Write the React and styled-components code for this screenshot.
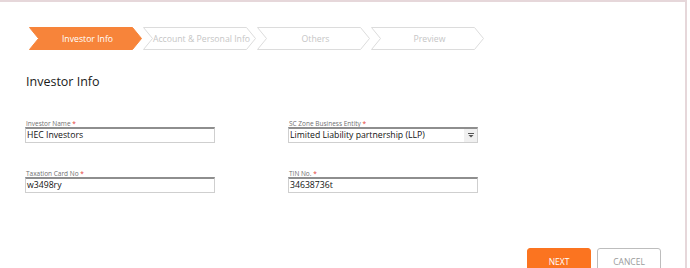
import React from "react";
import styled, { createGlobalStyle } from "styled-components";

const Global = createGlobalStyle`
  html, body { margin: 0; padding: 0; background: #fff; }
  body { font-family: "Open Sans", "Liberation Sans", sans-serif; }
`;

const Panel = styled.div`
  width: 687px;
  height: 268px;
  border-top: 2px solid #e6d7da;
  border-right: 2px solid #e6d7da;
  box-sizing: border-box;
  padding: 25px 0 0 25px;
  overflow: hidden;
`;

const Stepper = styled.div`
  display: flex;
  gap: 1px;
  margin-left: 4px;
`;

const StepBox = styled.div`
  position: relative;
  width: 113px;
  height: 23px;
  display: flex;
  align-items: center;
  justify-content: center;
  padding-left: 4px;
  box-sizing: border-box;
  font-size: 8.7px;
  color: ${(p) => (p.$active ? "#ffffff" : "#c6c6c6")};
`;

const StepShape = styled.svg`
  position: absolute;
  inset: 0;
`;

const StepLabel = styled.span`
  position: relative;
`;

const Step = ({ active, children }) => (
  <StepBox $active={active}>
    <StepShape width="113" height="23" viewBox="0 0 113 23">
      <polygon
        points="0.5,0.5 103.5,0.5 112.5,11.5 103.5,22.5 0.5,22.5 9.5,11.5"
        fill={active ? "#f7843a" : "#ffffff"}
        stroke={active ? "#f7843a" : "#dcdcdc"}
        strokeWidth="1"
      />
    </StepShape>
    <StepLabel>{children}</StepLabel>
  </StepBox>
);

const Heading = styled.h2`
  margin: 24px 0 0 1px;
  font-size: 12.5px;
  line-height: 16px;
  font-weight: 400;
  color: #1a1a1a;
`;

const Form = styled.div`
  display: grid;
  grid-template-columns: 190px 190px;
  column-gap: 73px;
  row-gap: 27px;
  margin-top: 30px;
`;

const Field = styled.div`
  display: flex;
  flex-direction: column;
`;

const Label = styled.label`
  font-size: 6.5px;
  line-height: 7px;
  color: #707070;
  margin: 0 0 0 1px;
  height: 7px;
`;

const Req = styled.span`
  color: #e53935;
`;

const Box = styled.div`
  position: relative;
  height: 16px;
  box-sizing: border-box;
  border: 1px solid #cfcfcf;
  border-top: 2px solid #8e8e8e;
  font-size: 8.7px;
  line-height: 13px;
  padding-left: 1px;
  color: #111;
  display: flex;
  align-items: center;
`;

const DropBtn = styled.div`
  position: absolute;
  right: 0;
  top: 0;
  bottom: 0;
  width: 13px;
  background: #f0f0f0;
  display: flex;
  align-items: center;
  justify-content: center;
`;

const Actions = styled.div`
  display: flex;
  justify-content: flex-end;
  gap: 6px;
  margin: 55px 24px 0 0;
`;

const Button = styled.div`
  width: 64px;
  height: 24px;
  box-sizing: border-box;
  border-radius: 3px;
  display: flex;
  justify-content: center;
  padding-top: 7px;
  font-size: 8.5px;
  background: ${(p) => (p.$primary ? "#fb7420" : "#ffffff")};
  color: ${(p) => (p.$primary ? "#ffffff" : "#9a9a9a")};
  border: 1px solid ${(p) => (p.$primary ? "#fb7420" : "#bdbdbd")};
`;

const Input = ({ label, value, select }) => (
  <Field>
    <Label>
      {label} <Req>*</Req>
    </Label>
    <Box>
      {value}
      {select && (
        <DropBtn>
          <svg width="6" height="5" viewBox="0 0 6 5">
            <rect x="0" y="0" width="6" height="1" fill="#555" />
            <polygon points="0.5,2 5.5,2 3,4.5" fill="#555" />
          </svg>
        </DropBtn>
      )}
    </Box>
  </Field>
);

export default function App() {
  return (
    <>
      <Global />
      <Panel>
        <Stepper>
          <Step active>Investor Info</Step>
          <Step>Account &amp; Personal Info</Step>
          <Step>Others</Step>
          <Step>Preview</Step>
        </Stepper>
        <Heading>Investor Info</Heading>
        <Form>
          <Input label="Investor Name" value="HEC Investors" />
          <Input label="SC Zone Business Entity" value="Limited Liability partnership (LLP)" select />
          <Input label="Taxation Card No" value="w3498ry" />
          <Input label="TIN No." value="34638736t" />
        </Form>
        <Actions>
          <Button $primary>NEXT</Button>
          <Button>CANCEL</Button>
        </Actions>
      </Panel>
    </>
  );
}
